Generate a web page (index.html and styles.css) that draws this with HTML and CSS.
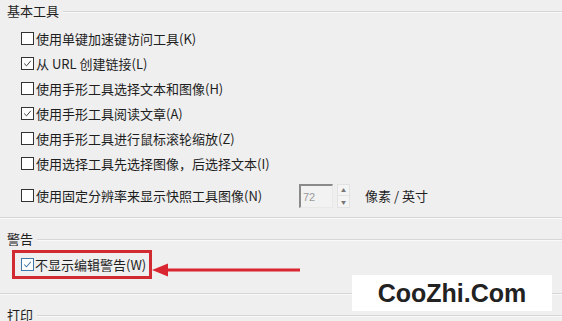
FILE: index.html
```html
<!DOCTYPE html>
<html lang="zh-CN">
<head>
<meta charset="utf-8">
<link rel="stylesheet" href="styles.css">
</head>
<body>
<div class="page">
  <div class="header"><span class="htext">基本工具</span><span class="hline"></span></div>
  <div class="rows">
    <div class="row"><span class="cb"></span><span class="label">使用单键加速键访问工具(K)</span></div>
    <div class="row"><span class="cb checked"><svg viewBox="0 0 13 13"><path d="M2.5 6.5 L5.3 9.3 L10.5 3.3" fill="none" stroke="#333" stroke-width="1.1"/></svg></span><span class="label">从 URL 创建链接(L)</span></div>
    <div class="row"><span class="cb"></span><span class="label">使用手形工具选择文本和图像(H)</span></div>
    <div class="row"><span class="cb checked"><svg viewBox="0 0 13 13"><path d="M2.5 6.5 L5.3 9.3 L10.5 3.3" fill="none" stroke="#333" stroke-width="1.1"/></svg></span><span class="label">使用手形工具阅读文章(A)</span></div>
    <div class="row"><span class="cb"></span><span class="label">使用手形工具进行鼠标滚轮缩放(Z)</span></div>
    <div class="row"><span class="cb"></span><span class="label">使用选择工具先选择图像，后选择文本(I)</span></div>
  </div>
  <div class="row spinrow">
    <span class="cb"></span><span class="label wide">使用固定分辨率来显示快照工具图像(N)</span>
    <span class="numbox">72</span>
    <span class="spin"><span class="up">▲</span><span class="down">▼</span></span>
    <span class="unit">像素 / 英寸</span>
  </div>
  <div class="sep first"></div>
  <div class="header h2"><span class="htext">警告</span><span class="hline"></span></div>
  <div class="redbox">
    <span class="cb blue"><svg viewBox="0 0 13 13"><path d="M2.5 6.5 L5.3 9.3 L10.5 3.3" fill="none" stroke="#3d78a8" stroke-width="1.2"/></svg></span><span class="label">不显示编辑警告(W)</span>
  </div>
  <div class="sep second"></div>
  <div class="header h3"><span class="htext">打印</span><span class="hline"></span></div>

  <svg class="arrow" width="150" height="16" viewBox="0 0 150 16"><path d="M14 8 H148" stroke="#d92630" stroke-width="3"/><path d="M0 8 L16 1.5 L16 14.5 Z" fill="#d92630"/></svg>
  <div class="watermark">CooZhi.Com</div>
</div>
</body>
</html>
```
FILE: styles.css
```css
html, body {
  margin: 0;
  padding: 0;
  background: #efefef;
}
.page {
  position: relative;
  width: 562px;
  height: 321px;
  overflow: hidden;
  font-family: "Noto Sans CJK SC", "Microsoft YaHei", sans-serif;
  font-size: 13px;
  color: #1e1e1e;
}
.header {
  display: flex;
  align-items: center;
  height: 22px;
  padding-left: 7px;
}
.htext {
  line-height: 22px;
}
.hline {
  flex: 1;
  margin-left: 4px;
  height: 0;
  border-top: 1px solid #d6d6d6;
  border-bottom: 1px solid #f9f9f9;
  margin-top: 1px;
}
.rows {
  margin-top: 4px;
}
.row {
  display: flex;
  align-items: center;
  height: 25px;
  padding-left: 21px;
}
.cb {
  box-sizing: border-box;
  width: 13px;
  height: 13px;
  border: 1px solid #333;
  background: #fff;
  flex: none;
  display: flex;
}
.cb svg {
  width: 11px;
  height: 11px;
}
.cb.blue {
  border-color: #3d78a8;
}
.label {
  margin-left: 2px;
  white-space: nowrap;
  line-height: 25px;
}
.spinrow {
  margin-top: 7px;
}
.label.wide {
  width: 263px;
}
.numbox {
  box-sizing: border-box;
  width: 34px;
  height: 24px;
  border-top: 2px solid #8a8a8a;
  border-left: 2px solid #8a8a8a;
  border-right: 1px solid #e8e8e8;
  border-bottom: 1px solid #e8e8e8;
  background: #f2f2f2;
  color: #9a9a9a;
  font-family: "Liberation Sans", sans-serif;
  font-size: 11px;
  padding: 3px 0 0 2px;
  line-height: 16px;
}
.spin {
  margin-left: 4px;
  width: 11px;
  height: 22px;
  display: flex;
  flex-direction: column;
  border: 1px solid #e2e2e2;
  background: #f4f4f4;
}
.spin span {
  flex: 1;
  font-size: 5px;
  color: #777;
  display: flex;
  align-items: center;
  justify-content: center;
}
.spin .up {
  border-bottom: 1px solid #e2e2e2;
}
.unit {
  margin-left: 15px;
  white-space: nowrap;
}
.sep {
  height: 0;
  border-top: 1px solid #d6d6d6;
  border-bottom: 1px solid #f9f9f9;
}
.sep.first {
  margin-top: 9px;
}
.h2 {
  margin-top: 9px;
}
.redbox {
  display: inline-flex;
  align-items: center;
  box-sizing: border-box;
  height: 29px;
  width: 140px;
  margin-left: 12px;
  border: 3px solid #d12a30;
  padding-left: 6px;
}
.redbox .label {
  margin-left: 1px;
  line-height: 23px;
}
.sep.second {
  margin-top: 14px;
}
.h3 {
  margin-top: 9px;
}
.arrow {
  position: absolute;
  left: 152px;
  top: 262px;
}
.watermark {
  position: absolute;
  left: 352px;
  top: 275px;
  width: 200px;
  height: 36px;
  background: #fff;
  font-family: "Liberation Sans", Arial, sans-serif;
  font-weight: bold;
  font-size: 25px;
  color: #222;
  display: flex;
  align-items: center;
  justify-content: center;
}
```
